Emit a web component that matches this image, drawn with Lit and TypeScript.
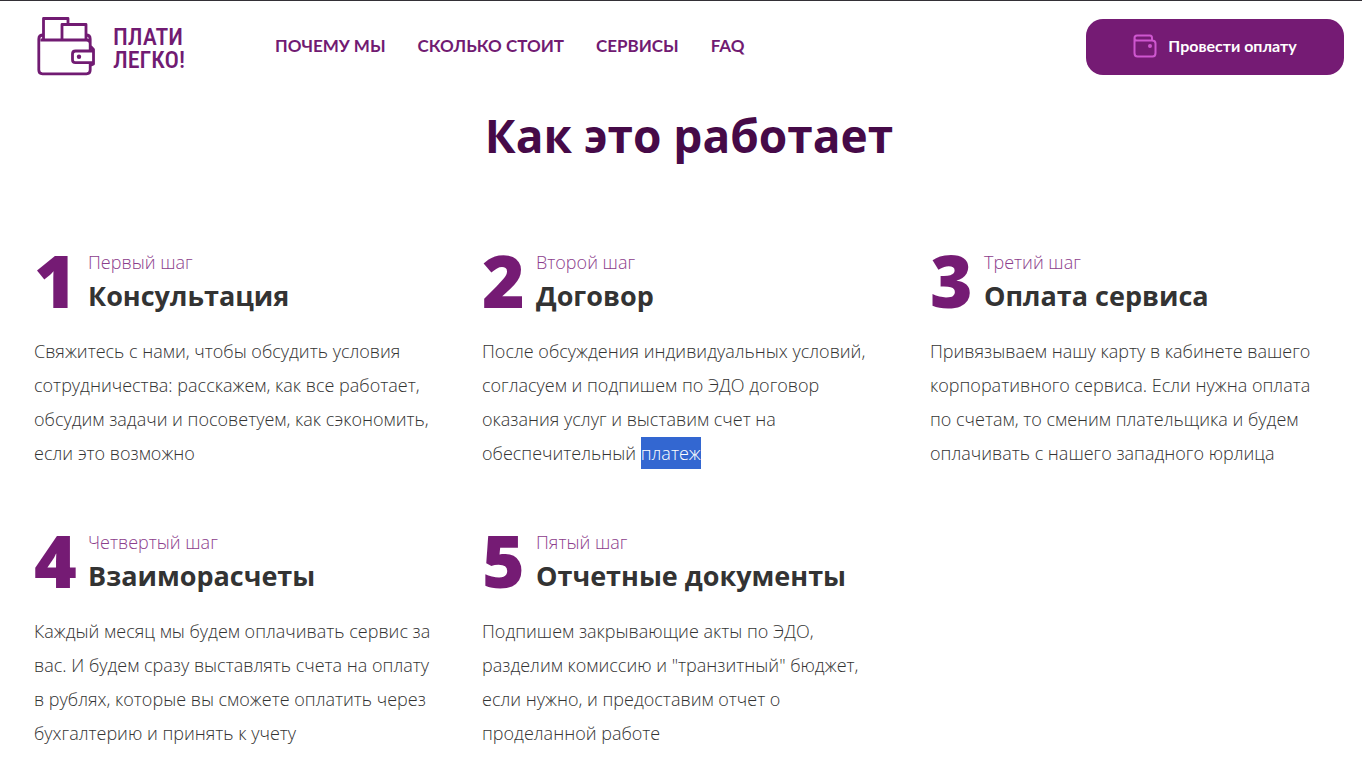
import { LitElement, html, css, nothing } from "lit";
import { customElement, property } from "lit/decorators.js";

interface Step {
  label: string;
  title: string;
  text: string;
  marked?: string;
}

const STEPS: Step[] = [
  {
    label: "Первый шаг",
    title: "Консультация",
    text: "Свяжитесь с нами, чтобы обсудить условия сотрудничества: расскажем, как все работает, обсудим задачи и посоветуем, как сэкономить, если это возможно",
  },
  {
    label: "Второй шаг",
    title: "Договор",
    text: "После обсуждения индивидуальных условий, согласуем и подпишем по ЭДО договор оказания услуг и выставим счет на обеспечительный ",
    marked: "платеж",
  },
  {
    label: "Третий шаг",
    title: "Оплата сервиса",
    text: "Привязываем нашу карту в кабинете вашего корпоративного сервиса. Если нужна оплата по счетам, то сменим плательщика и будем оплачивать с нашего западного юрлица",
  },
  {
    label: "Четвертый шаг",
    title: "Взаиморасчеты",
    text: "Каждый месяц мы будем оплачивать сервис за вас. И будем сразу выставлять счета на оплату в рублях, которые вы сможете оплатить через бухгалтерию и принять к учету",
  },
  {
    label: "Пятый шаг",
    title: "Отчетные документы",
    text: 'Подпишем закрывающие акты по ЭДО, разделим комиссию и "транзитный" бюджет, если нужно, и предоставим отчет о проделанной работе',
  },
];

@customElement("site-header")
class SiteHeader extends LitElement {
  static styles = css`
    :host {
      display: block;
      border-top: 1px solid #333036;
    }
    .bar {
      display: flex;
      align-items: center;
      padding: 16px 18px 9px 34px;
      color: #711b72;
    }
    .logo {
      display: flex;
      align-items: center;
      gap: 15px;
      width: 241px;
      color: inherit;
      text-decoration: none;
    }
    .wallet {
      width: 64px;
      height: 60px;
    }
    .name {
      padding-top: 4px;
      font: 500 24px/23px "Roboto Condensed", Roboto, sans-serif;
    }
    .row {
      display: block;
    }
    .nav {
      display: flex;
      gap: 32px;
      padding-bottom: 2px;
      font: 700 17px/24px Lato, sans-serif;
    }
    .link {
      color: inherit;
      text-decoration: none;
    }
    .pay {
      display: flex;
      align-items: center;
      justify-content: center;
      gap: 11px;
      width: 258px;
      height: 56px;
      margin-left: auto;
      padding: 0 0 2px;
      border: 0;
      border-radius: 17px;
      background: #751b74;
      color: #fff;
      font: 700 16px/24px Lato, sans-serif;
    }
    .icon {
      width: 24px;
      height: 24px;
    }
  `;

  render() {
    return html`
      <header class="bar">
        <a class="logo" href="#">
          <svg class="wallet" viewBox="0 0 64 60" fill="none" stroke="currentColor" stroke-width="2.800" stroke-linejoin="round" aria-hidden="true">
            <path d="M9.500 22V1.500H34V7.500M28 22V7.500H52V22" />
            <path d="M9.500 18C6.500 18 4.800 19.500 4.800 22V53C4.800 55.500 6 56.800 8.500 56.800H52.500C55 56.800 56.200 55.500 56.200 53V46M6.500 23H52.500C55 23 56.200 24 56.200 26.500V34M52 18C55 18 56.200 19.500 56.200 22V29L59.500 32.500V47L56.200 48.500" />
            <path d="M59.500 34H41.500C39.500 34 38.500 35 38.500 37V42.700C38.500 44.700 39.500 45.700 41.500 45.700H59.500" />
            <circle cx="45" cy="39.800" r="2.200" fill="currentColor" stroke="none" />
          </svg>
          <span class="name"><span class="row">ПЛАТИ</span><span class="row">ЛЕГКО!</span></span>
        </a>
        <nav class="nav">
          <a class="link" href="#why">ПОЧЕМУ МЫ</a>
          <a class="link" href="#price">СКОЛЬКО СТОИТ</a>
          <a class="link" href="#services">СЕРВИСЫ</a>
          <a class="link" href="#faq">FAQ</a>
        </nav>
        <button class="pay" type="button">
          <svg class="icon" viewBox="0 0 24 24" fill="none" stroke="#cf57d0" stroke-width="2" stroke-linejoin="round" stroke-linecap="round" aria-hidden="true">
            <path d="M19 6V4C19 2.500 18.500 1.500 17 1.500H4C2.500 1.500 1.500 2.500 1.500 4S2.500 6.500 4 6.500H19C21.500 6.500 22.500 7.500 22.500 9.500V19C22.500 21.500 21.500 22.500 19.500 22.500H4.500C2.500 22.500 1.500 21.500 1.500 19V4" />
            <circle cx="17" cy="12" r="1" fill="#cf57d0" />
          </svg>
          Провести оплату
        </button>
      </header>
    `;
  }
}

@customElement("step-card")
class StepCard extends LitElement {
  @property({ type: Number }) number = 1;
  @property({ attribute: false }) step!: Step;

  static styles = css`
    :host {
      display: block;
    }
    .head {
      display: grid;
      grid-template-columns: 54px 1fr;
      height: 68px;
    }
    .number {
      color: #751b74;
      font-size: 73px;
      font-weight: 800;
      line-height: 68px;
    }
    .label {
      margin: 0;
      color: #8c3d8c;
      font-size: 18px;
      font-weight: 300;
      line-height: 32px;
    }
    .title {
      margin: 0;
      color: #333;
      font-size: 27px;
      font-weight: 700;
      line-height: 36px;
    }
    .text {
      margin: 20px 0 0;
      padding-right: 12px;
      color: #333;
      font-size: 18px;
      font-weight: 300;
      line-height: 34px;
    }
    .marked {
      padding: 4px 0;
      background: #3367d1;
      color: #fff;
    }
  `;

  render() {
    const { label, title, text, marked } = this.step;
    return html`
      <article>
        <div class="head">
          <span class="number">${this.number}</span>
          <div>
            <p class="label">${label}</p>
            <h2 class="title">${title}</h2>
          </div>
        </div>
        <p class="text">${text}${marked ? html`<mark class="marked">${marked}</mark>` : nothing}</p>
      </article>
    `;
  }
}

@customElement("app-root")
class AppRoot extends LitElement {
  static styles = css`
    :host {
      display: block;
      background: #fff;
      font-family: "Open Sans", sans-serif;
    }
    .main {
      padding: 17px 18px 34px 34px;
    }
    .heading {
      margin: 0;
      color: #460a48;
      font-size: 46px;
      font-weight: 700;
      line-height: 64px;
      text-align: center;
    }
    .steps {
      display: grid;
      grid-template-columns: repeat(3, 1fr);
      gap: 56px 34px;
      margin-top: 79px;
    }
  `;

  render() {
    return html`
      <site-header></site-header>
      <main class="main">
        <h1 class="heading">Как это работает</h1>
        <section class="steps">
          ${STEPS.map((step, i) => html`<step-card .number=${i + 1} .step=${step}></step-card>`)}
        </section>
      </main>
    `;
  }
}
